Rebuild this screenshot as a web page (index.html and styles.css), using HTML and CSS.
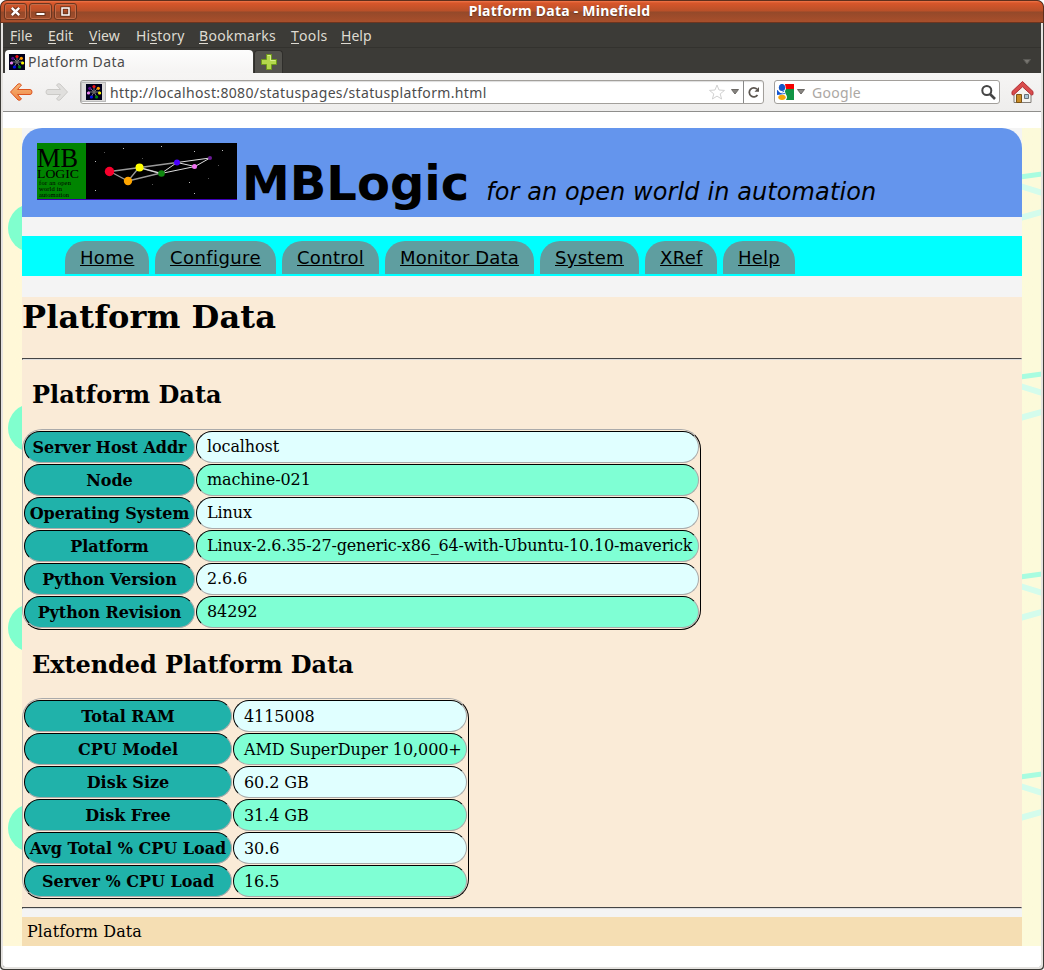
FILE: index.html
```
<!DOCTYPE html>
<html lang="en">
<head>
<meta charset="utf-8">
<title>Platform Data - Minefield</title>
<link rel="stylesheet" href="styles.css">
</head>
<body>
<svg class="defs" width="0" height="0" aria-hidden="true">
  <symbol id="favicon" viewBox="0 0 16 16">
    <rect width="16" height="16" fill="#00001c"/>
    <path d="M8 8V3M8 8l4-4M8 8h6M8 8l3 5M8 8l-3 5M8 8H2M8 8L4 4" stroke="#777" stroke-width="1"/>
    <circle cx="8" cy="8" r="1.6" fill="#666"/>
    <circle cx="8" cy="2.5" r="1.6" fill="#f01010"/><circle cx="12.3" cy="4.3" r="1.6" fill="#ff9c00"/>
    <circle cx="13.6" cy="9" r="1.6" fill="#f6f600"/><circle cx="10.6" cy="13" r="1.6" fill="#008a10"/>
    <circle cx="5.4" cy="13" r="1.6" fill="#0010f0"/><circle cx="2.5" cy="9" r="1.6" fill="#ee82ee"/>
    <circle cx="3.8" cy="4.3" r="1.6" fill="#5a0a8c"/>
  </symbol>
</svg>
<div class="window">
  <header class="titlebar">
    <div class="buttons">
      <span class="winbtn"><svg width="21" height="15"><path d="M7 4l7 7M14 4l-7 7" stroke="#6a331c" stroke-width="4.500"/><path d="M6.800 3.800l7.400 7.400M14.200 3.800l-7.400 7.400" stroke="#fff" stroke-width="2.400"/></svg></span>
      <span class="winbtn"><svg width="21" height="15"><path d="M5.500 10h10" stroke="#6a331c" stroke-width="4"/><path d="M6.500 10h8" stroke="#fff" stroke-width="2"/></svg></span>
      <span class="winbtn"><svg width="21" height="15"><rect x="7" y="4" width="7" height="7" fill="none" stroke="#6a331c" stroke-width="3.400"/><rect x="7" y="4" width="7" height="7" fill="none" stroke="#fff" stroke-width="1.500"/></svg></span>
    </div>
    <div class="wintitle">Platform Data - Minefield</div>
  </header>
  <div class="frame">
    <nav class="menubar"><span class="m1"><u>F</u>ile</span><span class="m2"><u>E</u>dit</span><span class="m3"><u>V</u>iew</span><span class="m4">Hi<u>s</u>tory</span><span class="m5"><u>B</u>ookmarks</span><span class="m6"><u>T</u>ools</span><span class="m7"><u>H</u>elp</span></nav>
    <div class="tabs">
      <div class="tab"><svg width="16" height="16"><use href="#favicon"/></svg><span>Platform Data</span></div>
      <div class="newtab"><svg width="16" height="16"><path d="M5.500.5h5v5h5v5h-5v5h-5v-5h-5v-5h5z" fill="#b4d84c" stroke="#6f9a1c"/><path d="M6.500 1.500h3v5h5" fill="none" stroke="#d8ee8c"/></svg></div>
      <svg class="alltabs" width="8" height="6"><path d="M.5.5h7L4 5z" fill="#777570" stroke="#5b5a56"/></svg>
    </div>
    <div class="toolbar">
      <svg class="back" width="24" height="20" viewBox="0 0 24 20"><defs><linearGradient id="og" x2="0" y2="1"><stop stop-color="#f7b878"/><stop offset="1" stop-color="#ee8443"/></linearGradient></defs><path d="M1.500 10L9 2q2-1 3.500 1L8.500 7.500H21q2 0 2 2.500t-2 2.500H8.500l4 4.500q-1.500 2-3.500 1z" fill="url(#og)" stroke="#dc5420" stroke-linejoin="round"/></svg>
      <svg class="fwd" width="24" height="20" viewBox="0 0 24 20"><path d="M22.500 10L15 2q-2-1-3.500 1L15.500 7.500H3q-2 0-2 2.500t2 2.500h12.500l-4 4.500q1.500 2 3.500 1z" fill="#e0dfdd" stroke="#cbcac7" stroke-linejoin="round"/></svg>
      <div class="url">
        <span class="identity"><svg width="16" height="16"><use href="#favicon"/></svg></span>
        <span class="address">http://localhost:8080/statuspages/statusplatform.html</span>
        <svg class="star" width="16" height="16" viewBox="0 0 16 16"><path d="M8 1l2 5 5.500.4-4.300 3.500L12.600 15 8 12.100 3.400 15l1.400-5.100L.5 6.400 6 6z" fill="#fff" stroke="#d0d0d0"/></svg>
        <svg class="drop" width="8" height="6"><path d="M.5.5h7L4 5z" fill="#85827e" stroke="#6d6a66"/></svg>
        <span class="reload"><svg width="12" height="12" viewBox="0 0 12 12"><path d="M9.500 9A4.500 4.500 0 1 1 9 3.200" fill="none" stroke="#5c5650" stroke-width="1.800"/><path d="M6.500 5.700H11V1z" fill="#5c5650"/></svg></span>
      </div>
      <div class="search">
        <svg class="google" width="17" height="16" viewBox="0 0 17 16"><path d="M8 0h9v5H9z" fill="#f40000"/><path d="M9 5h8v11H9q2-3 0-5.500-2-3 0-5.500z" fill="#109444"/><path d="M0 6q3 0 3.500 2.500L7 7l1 3-8 1z" fill="#1456d0"/><ellipse cx="5" cy="3.500" rx="3.200" ry="3.600" fill="#1456c8"/><ellipse cx="5" cy="13.300" rx="3.700" ry="2.600" fill="#f5a70a"/><path d="M0 4q4 7 8 4" fill="none" stroke="#fff" stroke-width="1.300"/></svg>
        <svg class="gdrop" width="8" height="6"><path d="M.5.5h7L4 5z" fill="#8a8783" stroke="#6a6763"/></svg>
        <span class="placeholder">Google</span>
        <svg class="lens" width="15" height="15" viewBox="0 0 15 15"><circle cx="5.800" cy="5.500" r="4.500" fill="#fff" stroke="#454545" stroke-width="2"/><path d="M9 9l5 5" stroke="#454545" stroke-width="2.600"/></svg>
      </div>
      <svg class="home" width="23" height="24" viewBox="0 0 23 24"><path d="M3 13l8.500-8L20 13v9.500H3z" fill="#f4f3f0" stroke="#827d78"/><path d="M1 14.500V11.500L11.500 1.500 22 11.500v3l-1.500.5L11.500 6.800 2.500 15z" fill="#d94c4c" stroke="#b02f36"/><path d="M5.500 14.500h5v8h-5z" fill="#ca8d25" stroke="#7c5417"/><path d="M13.500 14.500h4v4h-4z" fill="#a9c4d8" stroke="#68727a"/></svg>
    </div>
    <main class="viewport">
      <div class="backdrop">
        <svg class="pattern" width="1038" height="818" aria-hidden="true">
          <defs>
            <linearGradient id="cream"><stop stop-color="#fff8d8"/><stop offset="1" stop-color="#fcfada"/></linearGradient>
            <pattern id="tile" width="1039" height="200" patternUnits="userSpaceOnUse">
              <circle cx="29.300" cy="100" r="24.300" fill="#80ffce"/>
              <path d="M1017 49l22-3" stroke="#a8fce0" stroke-width="5"/>
              <path d="M1017 58l22 7M1017 90l22-6" stroke="#d4fcec" stroke-width="6"/>
            </pattern>
          </defs>
          <rect width="1039" height="818" fill="url(#cream)"/>
          <rect width="1039" height="818" fill="url(#tile)"/>
        </svg>
        <div class="page">
          <div class="banner">
            <svg class="logo" width="200" height="57" viewBox="0 0 200 57">
              <rect width="200" height="57"/><rect width="49" height="56" fill="#008400"/><rect y="56" width="200" height="1" fill="#3c00b4"/>
              <g class="logotext"><text x="0" y="23.500" font-size="27" textLength="41" lengthAdjust="spacingAndGlyphs">MB</text><text x="0" y="35" font-size="13.500" textLength="42" lengthAdjust="spacingAndGlyphs">LOGIC</text><text x="2" y="42" font-size="6.500" textLength="32">for an open</text><text x="2" y="48" font-size="6.500" textLength="23">world in</text><text x="2" y="54" font-size="6.500" textLength="30">automation</text></g>
              <path d="M73 28.500L140 19.500M102 24.500l-11 13.500M73 28.500L91 38l33-8M102 24.500l22 6" fill="none" stroke="#999" stroke-width="1.300"/>
              <path d="M124 30.500l34-7 15-8.500-33 4.500 18 4M140 19.500l-16 11M102 24.500l22 6" fill="none" stroke="#ddd"/>
              <circle cx="72.500" cy="28.500" r="4.700" fill="#f8002c"/><circle cx="102.500" cy="24.500" r="4" fill="#ff0"/><circle cx="91" cy="38" r="4.200" fill="#ffa500"/><circle cx="124.500" cy="30.500" r="3.300" fill="#108810"/><circle cx="140" cy="19.500" r="3" fill="#4b00ff"/><circle cx="157.500" cy="23.500" r="2.500" fill="#ee72ee"/><circle cx="173" cy="15" r="2" fill="#6a1a96"/>
              <path d="M86 5.500h1M124 3.500h1M157 8.500h1M58 18.500h1M58 47.500h1M185 7.500h1M152 39.500h1M157 50.500h1" stroke="#bbb"/><path d="M115 41.500h1M181 22.500h1M171 35.500h1M67 9.500h1M105 15.500h1" stroke="#555"/>
            </svg>
            <h1>MBLogic</h1><em>for an open world in automation</em>
          </div>
          <nav class="links"><a class="home-link">Home</a><a class="configure">Configure</a><a class="control">Control</a><a class="monitor">Monitor Data</a><a class="system">System</a><a class="xref">XRef</a><a class="help">Help</a></nav>
          <section class="content">
            <h2>Platform Data</h2>
            <hr>
            <h3>Platform Data</h3>
            <div class="grid platform">
              <b>Server Host Addr</b><span>localhost</span>
              <b>Node</b><span>machine-021</span>
              <b>Operating System</b><span>Linux</span>
              <b>Platform</b><span class="tight">Linux-2.6.35-27-generic-x86_64-with-Ubuntu-10.10-maverick</span>
              <b>Python Version</b><span>2.6.6</span>
              <b>Python Revision</b><span>84292</span>
            </div>
            <h3 class="second">Extended Platform Data</h3>
            <div class="grid extended">
              <b>Total RAM</b><span>4115008</span>
              <b>CPU Model</b><span class="snug">AMD SuperDuper 10,000+</span>
              <b>Disk Size</b><span>60.2 GB</span>
              <b>Disk Free</b><span>31.4 GB</span>
              <b>Avg Total % CPU Load</b><span>30.6</span>
              <b>Server % CPU Load</b><span>16.5</span>
            </div>
            <hr class="last">
          </section>
          <footer>Platform Data</footer>
        </div>
      </div>
    </main>
  </div>
</div>
</body>
</html>
```
FILE: styles.css
```
* { box-sizing: border-box; }
body { margin: 0; background: #fff; width: 1044px; height: 970px; overflow: hidden; }
svg { display: block; flex: none; }
.defs { position: absolute; }
.window { width: 1044px; height: 970px; border-radius: 7px 7px 4px 4px; overflow: hidden; background: #3c3b37; font: 14px/18px "Noto Sans", "Open Sans", sans-serif; display: flex; flex-direction: column; }

/* Window chrome */
.titlebar { height: 23px; flex: none; display: grid; grid-template-columns: 77px 1fr; align-items: center; border: 1px solid #5f2f1c; border-bottom-color: #6d351f; border-radius: 7px 7px 0 0; background: linear-gradient(#f0764a 0, #d8562a 2px, #b85029 48%, #94492a 52%, #a94f2b 100%); }
.buttons { display: flex; gap: 2px; padding-left: 3px; }
.winbtn { width: 23px; height: 17px; border-radius: 3px; border: 1px solid #6b3620; box-shadow: inset 0 0 0 1px #c26c49; display: flex; align-items: center; justify-content: center; }
.wintitle { color: #fff; font-weight: 700; text-align: center; padding-right: 2px; line-height: 17px; margin-top: -2px; letter-spacing: .23px; text-shadow: 0 1px 1px #6d351f; }
.frame { flex: 1; min-height: 0; display: flex; flex-direction: column; margin: 0 1px 1px 1px; border: solid #e5e3e0; border-width: 0 2px 2px 2px; border-radius: 0 0 4px 4px; overflow: hidden; }
.menubar { height: 25px; flex: none; background: #3c3b37; color: #dfdbd2; display: flex; align-items: center; padding: 2px 0 0 7px; border-bottom: 1px solid #33322e; }
.menubar span { white-space: nowrap; flex: none; }
.menubar u { text-decoration: none; box-shadow: 0 -1px 0 #dfdbd2 inset; display: inline-block; height: 17px; line-height: 18px; vertical-align: top; }
.m1 { width: 38px; } .m2 { width: 41px; } .m3 { width: 47px; } .m4 { width: 63px; letter-spacing: .2px; } .m5 { width: 92px; letter-spacing: .3px; } .m6 { width: 50px; letter-spacing: .3px; }
.tabs { height: 25px; flex: none; background: #3c3b37; display: flex; align-items: flex-end; padding-left: 2px; }
.tab { width: 248px; height: 23px; background: linear-gradient(#fdfdfd, #f5f4f3); border-radius: 4px 4px 0 0; display: flex; align-items: center; gap: 3px; padding-left: 4px; color: #4c4c4c; letter-spacing: .42px; }
.newtab { width: 29px; height: 23px; margin-left: 1px; background: #53524d; border: 1px solid #2f2e2b; border-bottom: 0; border-radius: 4px 4px 0 0; display: flex; align-items: center; justify-content: center; }
.alltabs { margin: 0 10px 8px auto; }
.toolbar { height: 39px; flex: none; background: linear-gradient(#f6f5f4, #eeedec); border-bottom: 1px solid #8f8e8c; display: flex; align-items: center; padding-left: 6px; }
.fwd { margin-left: 12px; }
.url { width: 684px; height: 24px; margin-left: 11px; border: 1px solid #a29f9b; border-radius: 3px; background: #fff; display: flex; align-items: center; box-shadow: inset 0 1px 1px #ddd; }
.identity { width: 25px; height: 20px; background: #dddcda; border: 1px solid #bbb; display: flex; align-items: center; justify-content: center; }
.address { margin-left: 4px; padding-top: 2px; color: #4c4c4c; white-space: nowrap; letter-spacing: .35px; }
.star { margin-left: auto; margin-right: 6px; }
.drop { margin-right: 4px; }
.reload { width: 20px; height: 22px; border-left: 1px solid #888; display: flex; align-items: center; justify-content: center; }
.search { width: 226px; height: 24px; margin-left: 10px; border: 1px solid #a29f9b; border-radius: 3px; background: #fff; display: flex; align-items: center; padding: 0 3px 0 2px; }
.gdrop { margin: 0 7px 0 3px; }
.placeholder { color: #aca8a4; padding-top: 2px; letter-spacing: .3px; }
.lens { margin-left: auto; }
.home { margin-left: 11px; }

/* Document */
.viewport { flex: 1; background: #fff; padding-top: 16px; font: 16px/20px "DejaVu Serif", serif; color: #000; }
.backdrop { display: grid; width: 1038px; height: 818px; }
.pattern, .page { grid-area: 1 / 1; }
.page { margin-left: 19px; width: 1000px; height: 818px; background: #f4f4f4; display: flex; flex-direction: column; }
.banner { height: 89px; background: #6495ed; border-radius: 20px 20px 0 0; padding: 15px 0 0 15px; display: flex; align-items: baseline; font-family: "DejaVu Sans", sans-serif; white-space: nowrap; }
.logo { align-self: flex-start; }
.logotext { font-family: "Liberation Serif", serif; }
.banner h1 { margin: 0 0 0 5px; font-size: 48px; line-height: 80px; }
.banner em { margin-left: 17px; font-size: 24px; line-height: 30px; letter-spacing: .1px; }
.links { margin-top: 19px; height: 40px; background: #0ff; padding: 5px 0 0 43px; display: flex; gap: 6px; font: 18px/33px "DejaVu Sans", sans-serif; }
.links a { height: 33px; padding-left: 15px; background: #5f9ea0; border-radius: 20px 20px 0 0; text-decoration: underline; white-space: nowrap; }
.links .home-link { width: 84px; letter-spacing: .3px; }
.links .configure { width: 121px; letter-spacing: .42px; }
.links .control { width: 97px; letter-spacing: .3px; }
.links .monitor { width: 149px; letter-spacing: .15px; }
.links .system { width: 99px; letter-spacing: .3px; }
.links .xref { width: 72px; letter-spacing: .3px; }
.links .help { width: 72px; letter-spacing: .2px; }
.content { margin-top: 21px; height: 612px; background: #faebd7; display: flex; flex-direction: column; align-items: flex-start; }
h2 { margin: 0; font-size: 32px; line-height: 40px; letter-spacing: .1px; }
hr { margin: 21px 0 0; width: 1000px; height: 2px; border: 1px solid; border-color: #444 #ddd #ddd #444; }
h3 { margin: 20px 0 0 10px; font-size: 24px; line-height: 30px; }
.grid { display: grid; grid-auto-rows: 32px; gap: 1px; padding: 1px; border: 1px solid; border-color: #aaa #000 #000 #aaa; border-radius: 20px; }
.grid b, .grid span { border: 1px solid; border-color: #000 #aaa #aaa #000; border-radius: 20px; white-space: nowrap; line-height: 31px; }
.grid b { background: #20b2aa; text-align: center; }
.grid span { background: #e0ffff; padding-left: 10px; }
.grid span:nth-child(4n) { background: #7fffd4; }
.platform { width: 679px; margin-top: 19px; grid-template-columns: 171px 503px; }
.platform b { letter-spacing: -.05px; line-height: 32px; }
.platform span { line-height: 29px; letter-spacing: -.1px; }
.platform .tight { letter-spacing: -.18px; }
.extended { width: 447px; margin-top: 18px; grid-template-columns: 208px 234px; }
.extended b, .extended span { line-height: 32px; }
.extended span { letter-spacing: -.1px; }
.extended .snug { letter-spacing: -.08px; }
h3.second { margin-top: 20px; letter-spacing: -.07px; }
hr.last { margin-top: 8px; }
footer { margin-top: 8px; height: 29px; background: #f5deb3; padding-left: 5px; line-height: 30px; letter-spacing: .1px; }
```
